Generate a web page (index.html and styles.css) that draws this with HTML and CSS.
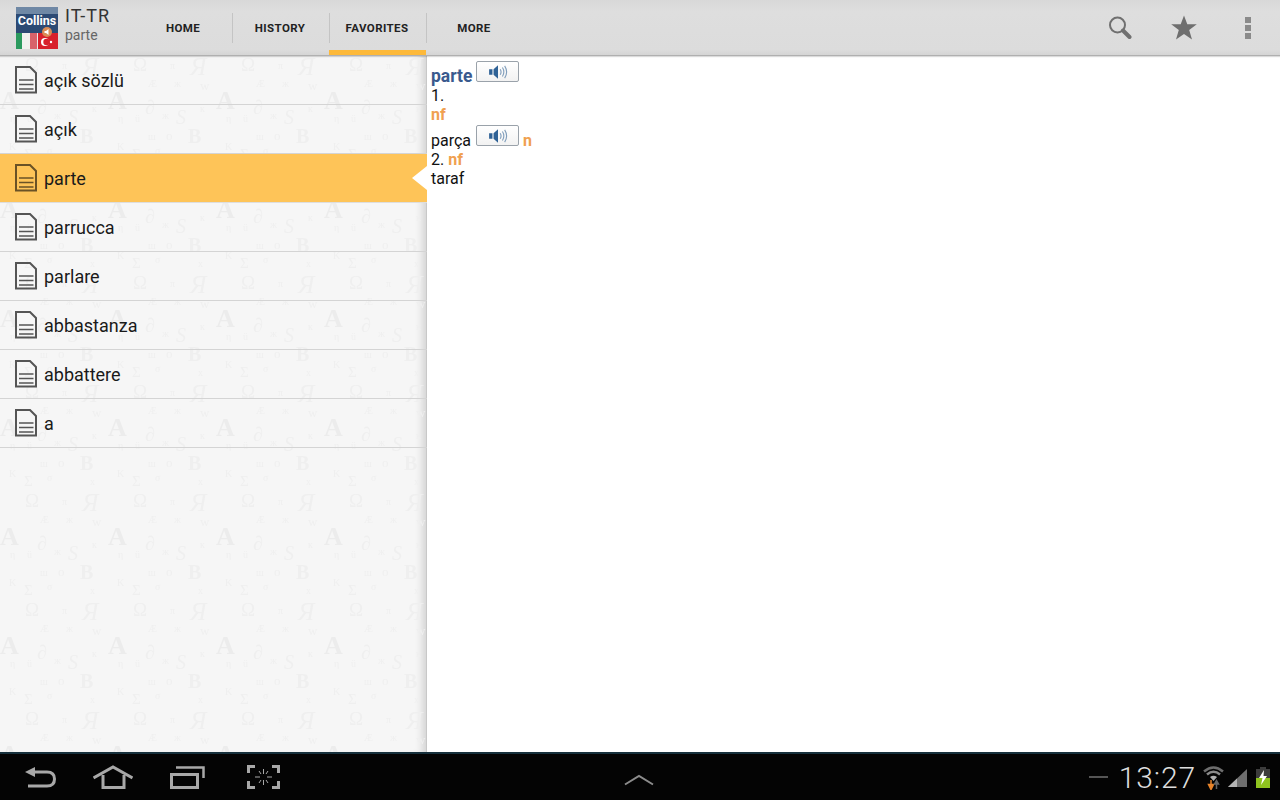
FILE: index.html
```html
<!DOCTYPE html>
<html>
<head>
  <title>IT-TR Dictionary</title>
  <meta name="viewport" content="width=device-width, initial-scale=1.0">
  <link rel="stylesheet" href="styles.css">
</head>
<body>
  <svg class="defs" width="0" height="0">
    <defs>
      <symbol id="doc" viewBox="0 0 24 28">
        <path d="M1 1H15L21 7V26.500H1Z" fill="none" stroke="currentColor" stroke-width="2"/>
        <path d="M4 14H18.500 M4 18.500H18.500 M4 23H18.500" fill="none" stroke="currentColor" stroke-width="1.500"/>
      </symbol>
      <symbol id="speaker" viewBox="0 0 18 14">
        <path d="M1 4.500H4V9.500H1Z M5 4.500L9 1V13L5 9.500Z" fill="#2f6296"/>
        <path d="M11 4.500Q12.500 7 11 9.500 M13 3Q15.500 7 13 11 M15 1.500Q18.500 7 15 12.500" fill="none" stroke="#7f9dbb" stroke-width="1"/>
      </symbol>
      <pattern id="letters" patternUnits="userSpaceOnUse" width="108" height="109" y="78">
        <g class="wm">
          <!-- B and the two small letters cross the tile edge, so they are drawn twice -->
          <text x="80" y="9" class="wm-b">B</text>
          <text x="80" y="118" class="wm-b">B</text>
          <text x="40" y="6" class="wm-s">ш</text>
          <text x="40" y="115" class="wm-s">ш</text>
          <text x="58" y="6" class="wm-m">o</text>
          <text x="58" y="115" class="wm-m">o</text>
          <text x="9" y="16" class="wm-s">K</text>
          <text x="24" y="25" class="wm-m2">Σ</text>
          <text x="47" y="20" class="wm-s">σ</text>
          <text x="90" y="24" class="wm-s">x</text>
          <text x="25" y="46" class="wm-l">Ω</text>
          <text x="62" y="44" class="wm-s">π</text>
          <text x="82" y="50" class="wm-i">Я</text>
          <text x="40" y="62" class="wm-s">Æ</text>
          <text x="66" y="62" class="wm-s">ж</text>
          <text x="92" y="65" class="wm-m">w</text>
          <text x="0" y="84" class="wm-a">A</text>
          <text x="37" y="89" class="wm-i2">∂</text>
          <text x="92" y="87" class="wm-s">к</text>
          <text x="68" y="99" class="wm-i2">S</text>
          <text x="27" y="97" class="wm-s">ü</text>
          <text x="10" y="97" class="wm-s">η</text>
          <text x="54" y="94" class="wm-s">ж</text>
        </g>
      </pattern>
    </defs>
  </svg>

  <header class="topbar">
    <svg class="logo" width="42" height="42" viewBox="0 0 42 42">
      <rect width="42" height="42" rx="2" fill="#2c4a74"/>
      <rect width="42" height="7" fill="#6f88a5"/>
      <text x="21" y="18" class="logo-text">Collins</text>
      <rect y="26" width="6" height="16" fill="#2b9a5e"/>
      <rect x="6" y="26" width="8" height="16" fill="#f1f1ef"/>
      <rect x="14" y="26" width="7" height="16" fill="#d8626a"/>
      <rect x="21" y="26" width="1" height="16" fill="#e8e8e8"/>
      <rect x="22" y="26" width="20" height="16" fill="#d8202c"/>
      <circle cx="29" cy="35" r="4" fill="#fff"/>
      <circle cx="30.500" cy="35" r="3.200" fill="#d8202c"/>
      <circle cx="35" cy="35" r="1.200" fill="#fff"/>
      <circle cx="31" cy="25" r="5" fill="#d98b55"/>
      <path d="M28.500 24H30L32.500 22V28L30 26H28.500Z" fill="#fff"/>
    </svg>
    <div class="brand">
      <div class="brand-title">IT-TR</div>
      <div class="brand-sub">parte</div>
    </div>
    <nav class="tabs">
      <a class="tab">HOME</a>
      <a class="tab">HISTORY</a>
      <a class="tab active">FAVORITES</a>
      <a class="tab last">MORE</a>
    </nav>
    <div class="actions">
      <svg class="action-search" width="24" height="24" viewBox="0 0 24 24">
        <circle cx="9.500" cy="9" r="7.500" fill="none" stroke="#707070" stroke-width="2"/>
        <path d="M15 14.500L21.500 21" stroke="#707070" stroke-width="4" stroke-linecap="round"/>
      </svg>
      <svg class="action-star" width="28" height="28" viewBox="0 0 28 28">
        <path d="M14 1.500L17.300 10.300H26.800L19.200 16L22 25.500L14 20L6 25.500L8.800 16L1.200 10.300H10.700Z" fill="#6f6f6f"/>
      </svg>
      <svg width="8" height="24" viewBox="0 0 8 24">
        <path d="M1 1H7V7H1Z M1 9H7V15H1Z M1 17H7V23H1Z" fill="#8a8a8a"/>
      </svg>
    </div>
  </header>

  <main class="main">
    <aside class="sidebar">
      <svg class="watermark" width="427" height="696"><rect width="427" height="696" fill="url(#letters)"/></svg>
      <ul class="word-list">
        <li class="word"><svg class="doc"><use href="#doc"/></svg>açık sözlü</li>
        <li class="word"><svg class="doc"><use href="#doc"/></svg>açık</li>
        <li class="word selected"><svg class="doc"><use href="#doc"/></svg>parte</li>
        <li class="word"><svg class="doc"><use href="#doc"/></svg>parrucca</li>
        <li class="word"><svg class="doc"><use href="#doc"/></svg>parlare</li>
        <li class="word"><svg class="doc"><use href="#doc"/></svg>abbastanza</li>
        <li class="word"><svg class="doc"><use href="#doc"/></svg>abbattere</li>
        <li class="word"><svg class="doc"><use href="#doc"/></svg>a</li>
      </ul>
    </aside>
    <section class="entry">
      <div class="line headword-line"><span class="headword">parte</span> <button class="sound"><svg width="20" height="16"><use href="#speaker"/></svg></button></div>
      <div class="line">1.</div>
      <div class="line"><span class="pos">nf</span></div>
      <div class="line trans-line"><span>parça</span><button class="sound"><svg width="20" height="16"><use href="#speaker"/></svg></button><span class="pos">n</span></div>
      <div class="line">2. <span class="pos">nf</span></div>
      <div class="line">taraf</div>
    </section>
  </main>

  <footer class="navbar">
    <div class="nav-left">
      <svg width="32" height="22" viewBox="0 0 32 22">
        <path d="M11 6H23Q30.500 6 30.500 13Q30.500 20 23 20H4" fill="none" stroke="#a8a8a8" stroke-width="3"/>
        <path d="M1 6L11 1V11Z" fill="#a8a8a8"/>
      </svg>
      <svg width="40" height="24" viewBox="0 0 40 24">
        <path d="M0.500 13L20 2L39.500 13" fill="none" stroke="#a8a8a8" stroke-width="3"/>
        <path d="M10 10V22.500H31V10" fill="none" stroke="#a8a8a8" stroke-width="3"/>
      </svg>
      <svg width="35" height="24" viewBox="0 0 35 24">
        <path d="M1.500 9.500H27.500V22.500H1.500Z" fill="none" stroke="#a8a8a8" stroke-width="3"/>
        <path d="M6 2.500H33.500V13" fill="none" stroke="#a8a8a8" stroke-width="2.500"/>
      </svg>
      <svg class="nav-shot" width="33" height="24" viewBox="0 0 33 24">
        <path d="M8 1.500H1.500V8 M25 1.500H31.500V8 M8 22.500H1.500V16 M25 22.500H31.500V16" fill="none" stroke="#a8a8a8" stroke-width="3"/>
        <path d="M16.500 4V9 M16.500 15V20 M8 12H13 M20 12H25 M12 6L14 9 M21 6L19 9 M12 18L14 15 M21 18L19 15" stroke="#a8a8a8" stroke-width="1"/>
      </svg>
    </div>
    <div class="nav-center">
      <svg width="30" height="12" viewBox="0 0 30 12">
        <path d="M1 10.500L15 2L29 10.500" fill="none" stroke="#8c8c8c" stroke-width="2"/>
      </svg>
    </div>
    <div class="nav-right">
      <span class="dash"></span>
      <span class="clock">13:27</span>
      <svg class="wifi" width="21" height="25" viewBox="0 0 21 25">
        <path d="M1 6.500Q10.500 -1.500 20 6.500" fill="none" stroke="#6e6e6e" stroke-width="2.500"/>
        <path d="M4 9.500Q10.500 4 17 9.500" fill="none" stroke="#8a8a8a" stroke-width="2.500"/>
        <path d="M7 12Q10.500 9.500 14 12L10.500 16Z" fill="#b0b0b0"/>
        <path d="M8 15V20M5.500 19.500L8 24.500L10.500 19.500Z" stroke="#e8842a" stroke-width="1.500" fill="#e8842a"/>
        <path d="M13.500 24V18M11.500 19L13.500 15.500L15.500 19Z" stroke="#666" stroke-width="1.500" fill="#666"/>
      </svg>
      <svg class="signal" width="19" height="18" viewBox="0 0 19 18">
        <path d="M0 18L19 0V18Z" fill="#6e6e6e"/>
        <path d="M0 18L9 9.500V18Z" fill="#b4b4b4"/>
      </svg>
      <svg class="battery" width="14" height="21" viewBox="0 0 14 21">
        <path d="M4 0H10V2H14V21H0V2H4Z" fill="#3c3c3c"/>
        <rect y="11" width="14" height="10" fill="#8fc31f"/>
        <path d="M8 3L3 11H6.500L5 18L11 9H7.500Z" fill="#fff"/>
      </svg>
    </div>
  </footer>
</body>
</html>
```

FILE: styles.css
```css
* {
  margin: 0;
  padding: 0;
  box-sizing: border-box;
}

body {
  font-family: 'Roboto', 'Liberation Sans', sans-serif;
  width: 1280px;
  height: 800px;
  display: flex;
  flex-direction: column;
  overflow: hidden;
  background: #fff;
  color: #111;
}

.defs {
  position: absolute;
}

.topbar {
  height: 56px;
  flex: none;
  display: flex;
  align-items: flex-start;
  background: linear-gradient(#d8d8d8, #dedede 12px, #dcdcdc 50px, #d5d5d5);
  border-bottom: 1px solid #b0b0b0;
  box-shadow: 0 1px 1px rgba(0, 0, 0, 0.14);
  position: relative;
  z-index: 3;
}

.logo {
  margin: 7px 7px 0 16px;
}

.logo-text {
  font-family: 'Roboto', sans-serif;
  font-size: 12.500px;
  font-weight: 700;
  fill: #fff;
  text-anchor: middle;
}

.brand {
  width: 71px;
  padding-top: 5px;
}

.brand-title {
  font-size: 18px;
  line-height: 22px;
  letter-spacing: 1px;
  color: #333;
}

.brand-sub {
  font-size: 14px;
  line-height: 17px;
  color: #666;
}

.tabs {
  display: flex;
  height: 55px;
}

.tab {
  width: 97px;
  height: 55px;
  display: flex;
  align-items: center;
  justify-content: center;
  padding-right: 3px;
  font-size: 11.500px;
  font-weight: 700;
  letter-spacing: 0.4px;
  color: #222;
  position: relative;
}

.tab::after {
  content: '';
  position: absolute;
  right: 0;
  top: 13px;
  height: 30px;
  width: 1px;
  background: #c4c4c4;
}

.tab.last::after {
  display: none;
}

.tab.active::before {
  content: '';
  position: absolute;
  left: -1px;
  right: 1px;
  bottom: 0;
  height: 5px;
  background: #fdb93a;
}

.actions {
  margin-left: auto;
  height: 55px;
  display: flex;
  align-items: center;
  padding-right: 28px;
}

.action-search {
  margin-right: 38px;
}

.action-star {
  margin-right: 46px;
}

.main {
  flex: 1;
  min-height: 0;
  display: flex;
}

.sidebar {
  width: 427px;
  flex: none;
  background: #f6f6f6;
  position: relative;
  overflow: hidden;
  box-shadow: inset -1px 0 0 #c8c8c8, inset -10px 0 8px -6px rgba(0, 0, 0, 0.16);
}

.watermark {
  position: absolute;
  left: 0;
  top: 0;
  filter: blur(0.4px);
}

.wm text {
  font-family: 'Liberation Serif', serif;
  fill: #efefef;
}

.wm .wm-s { font-size: 10px; }
.wm .wm-m { font-size: 13px; }
.wm .wm-m2 { font-size: 15px; }
.wm .wm-l { font-size: 19px; }
.wm .wm-b { font-size: 20px; font-weight: 700; }
.wm .wm-a { font-size: 26px; font-weight: 700; fill: #ececec; }
.wm .wm-i { font-size: 25px; font-style: italic; }
.wm .wm-i2 { font-size: 20px; font-style: italic; }

.word-list {
  list-style: none;
  position: relative;
}

.word {
  height: 49px;
  display: flex;
  align-items: center;
  font-size: 18px;
  color: #1a1a1a;
  padding-left: 15px;
  border-bottom: 1px solid #d4d4d4;
}

.doc {
  width: 24px;
  height: 28px;
  margin-right: 5px;
  color: #555;
}

.word.selected {
  background: #fec458;
  background-clip: padding-box;
  border-bottom-color: #dedede;
  position: relative;
}

.word.selected .doc {
  color: #6a5226;
}

.word.selected::after {
  content: '';
  position: absolute;
  right: 0;
  top: 12px;
  border-style: solid;
  border-width: 12px 15px 12px 0;
  border-color: transparent #fff transparent transparent;
}

.entry {
  flex: 1;
  padding: 5px 0 0 4px;
  font-size: 16px;
  line-height: 19px;
  color: #111;
}

.line {
  height: 19px;
}

.headword-line {
  height: 25px;
  display: flex;
  gap: 4px;
  align-items: flex-end;
}

.headword {
  font-weight: 700;
  font-size: 17.500px;
  line-height: 20px;
  color: #3a5a8e;
}

.pos {
  font-weight: 700;
  color: #f0a050;
}

.sound {
  width: 43px;
  height: 21px;
  background: linear-gradient(#fff, #f2f2f2);
  border: 1px solid #9aa2aa;
  border-radius: 2px;
  display: flex;
  align-items: center;
  justify-content: center;
  align-self: flex-start;
}

.trans-line {
  height: 26px;
  display: flex;
  align-items: flex-end;
  gap: 4px;
}

.trans-line .sound {
  margin: 1px 0 0 1px;
}

.navbar {
  height: 48px;
  flex: none;
  display: flex;
  align-items: center;
  background: #040404;
  border-top: 2px solid #16303c;
  position: relative;
}

.nav-left {
  display: flex;
  align-items: center;
  gap: 37px;
  padding-left: 24px;
}

.nav-shot {
  margin-left: 5px;
}

.nav-center {
  position: absolute;
  left: 624px;
  top: 17px;
}

.nav-right {
  margin-left: auto;
  display: flex;
  align-items: center;
  padding-right: 10px;
}

.dash {
  width: 19px;
  height: 2px;
  background: #555;
  margin-right: 11px;
}

.clock {
  font-size: 30px;
  font-weight: 300;
  letter-spacing: 0.9px;
  color: #ddd;
  margin-right: 7px;
}

.signal {
  margin-left: 4px;
  margin-top: 2px;
}

.battery {
  margin-left: 9px;
}
```
